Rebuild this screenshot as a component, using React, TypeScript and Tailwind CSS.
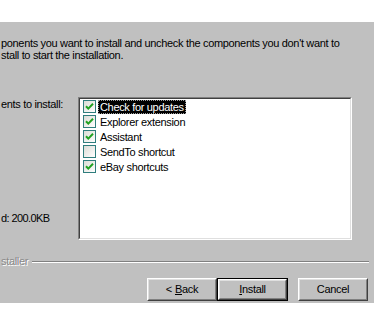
import React from "react";

const font = { fontFamily: '"Liberation Sans", Arial, sans-serif' };

function Check({ on }: { on: boolean }) {
  return (
    <div className="w-[13px] h-[13px] shrink-0 border border-[#2f7d7d] bg-gradient-to-br from-[#dcdcd6] to-[#ffffff] flex items-center justify-center">
      {on && (
        <svg width="11" height="11" viewBox="0 0 11 11">
          <path d="M2 5.2 L4.3 7.6 L9 2.8" fill="none" stroke="#21a121" strokeWidth="2" />
        </svg>
      )}
    </div>
  );
}

function Item({ label, on, sel }: { label: string; on: boolean; sel?: boolean }) {
  return (
    <div className="h-[15px] flex items-center pl-[3px]">
      <Check on={on} />
      <span
        className={
          sel
            ? "ml-[2px] h-[14px] leading-[12px] px-[1px] bg-black text-white border border-dotted border-[#9a9a9a]"
            : "ml-[2px] h-[14px] leading-[12px] px-[1px] border border-transparent text-black"
        }
      >
        {label}
      </span>
    </div>
  );
}

function Btn({ children, def }: { children: React.ReactNode; def?: boolean }) {
  const inner = (
    <div className="w-full h-full border-t border-l border-white border-b border-r border-b-[#404040] border-r-[#404040]">
      <div className="w-full h-full border-t border-l border-[#dfdfdf] border-b border-r border-b-[#808080] border-r-[#808080] flex items-center justify-center text-black">
        {children}
      </div>
    </div>
  );
  return (
    <div className={def ? "w-[71px] h-[23px] border border-black" : "w-[70px] h-[23px]"}>{inner}</div>
  );
}

export default function App() {
  return (
    <div className="w-[374px] h-[326px] bg-white text-[11px] tracking-[-0.33px] text-black overflow-hidden" style={font}>
      <div className="h-[22px] bg-white" />
      <div className="h-[281px] bg-[#c0c0c0] flex flex-col">
        <div className="mt-[15px] leading-[12px] pl-[1px] whitespace-nowrap">
          <div>ponents you want to install and uncheck the components you don't want to</div>
          <div>stall to start the installation.</div>
        </div>
        <div className="mt-[36px] flex">
          <div className="w-[78px] flex flex-col leading-[13px] pl-[1px]">
            <div className="mt-[1px]">ents to install:</div>
            <div className="mt-[101px] tracking-[-0.6px]">d: 200.0KB</div>
          </div>
          <div className="w-[274px] h-[143px] border-t border-l border-[#808080] border-b border-r border-b-white border-r-white">
            <div className="w-full h-full border-t border-l border-[#404040] border-b border-r border-b-[#dfdfdf] border-r-[#dfdfdf] bg-white pt-[0px]">
              <Item label="Check for updates" on sel />
              <Item label="Explorer extension" on />
              <Item label="Assistant" on />
              <Item label="SendTo shortcut" on={false} />
              <Item label="eBay shortcuts" on />
            </div>
          </div>
        </div>
        <div className="mt-[15px] flex items-center h-[13px]">
          <span className="text-[#8a8a8a] pl-[1px]" style={{ textShadow: "1px 1px 0 #ffffff" }}>
            staller
          </span>
          <div className="ml-[4px] flex-1 mr-[5px] h-[2px] border-t border-[#808080] border-b border-b-white" />
        </div>
        <div className="mt-[10px] flex justify-end pr-[6px]">
          <Btn>
            &lt; <u className="ml-[3px]">B</u>ack
          </Btn>
          <Btn def>
            <u>I</u>nstall
          </Btn>
          <div className="w-[10px]" />
          <Btn>Cancel</Btn>
        </div>
      </div>
    </div>
  );
}
